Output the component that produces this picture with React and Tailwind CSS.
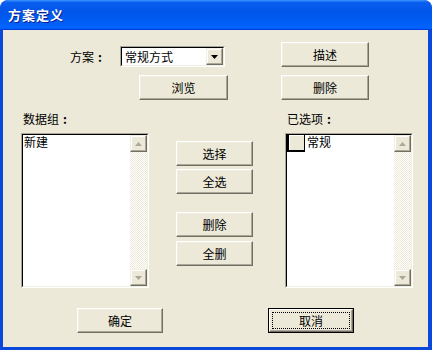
import React from 'react';

const font = { fontFamily: '"Noto Sans CJK SC", "Noto Sans", sans-serif' };

// full-width colon, centred in its 12px cell like the original bitmap font
function Colon() {
  return <span className="inline-block w-[12px] text-center font-bold">:</span>;
}

function Btn({ label, className = '' }) {
  return (
    <div
      className={`flex items-center justify-center h-[25px] bg-[#ece9d8] border border-t-white border-l-white border-b-[#716f64] border-r-[#716f64] shadow-[inset_-1px_-1px_0_#aca899,inset_1px_1px_0_#f1efe2] text-[12px] leading-[14px] text-black ${className}`}
    >
      {label}
    </div>
  );
}

function DefaultBtn({ label, className = '' }) {
  return (
    <div className={`h-[25px] border border-black ${className}`}>
      <div className="h-full flex bg-[#ece9d8] border border-t-white border-l-white border-b-[#716f64] border-r-[#716f64] shadow-[inset_-1px_-1px_0_#aca899]">
        <div className="flex-1 m-[2px] flex items-center justify-center border border-dotted border-black text-[12px] leading-[14px] text-black">
          {label}
        </div>
      </div>
    </div>
  );
}

function Arrow({ up, color }) {
  return (
    <svg width="7" height="4" viewBox="0 0 7 4">
      <polygon points={up ? '3.5,0 7,4 0,4' : '0,0 7,0 3.5,4'} fill={color} />
    </svg>
  );
}

function ScrollBtn({ up }) {
  return (
    <div className="w-[17px] h-[17px] flex items-center justify-center bg-[#ece9d8] border border-t-[#f1efe2] border-l-[#f1efe2] border-b-[#716f64] border-r-[#716f64] shadow-[inset_-1px_-1px_0_#aca899,inset_1px_1px_0_#fff]">
      <Arrow up={up} color="#aca899" />
    </div>
  );
}

function ListBox({ children, className = '' }) {
  return (
    <div className={`h-[155px] flex border border-t-[#aca899] border-l-[#aca899] border-b-white border-r-white ${className}`}>
      <div className="flex-1 flex bg-white border border-t-black border-l-black border-b-[#f1efe2] border-r-[#f1efe2]">
        <div className="flex-1 text-[12px] leading-[14px] text-black">{children}</div>
        <div className="w-[17px] flex flex-col bg-[repeating-conic-gradient(#ece9d8_0_25%,#fff_0_50%)] bg-size-[2px_2px]">
          <ScrollBtn up />
          <div className="flex-1" />
          <ScrollBtn />
        </div>
      </div>
    </div>
  );
}

export default function App() {
  return (
    <div className="w-[432px] h-[350px] bg-white" style={font}>
      <div className="w-full h-full flex flex-col rounded-t-[8px] bg-[#0a48dc] overflow-hidden">
        <div className="h-[30px] shrink-0 flex items-center pl-[8px] rounded-t-[8px] bg-[linear-gradient(180deg,#3d95ff_0,#0a5ff0_8%,#0055e8_40%,#0062fc_88%,#0066ff_93%,#005bff_95%,#0040d8_97%,#003dd7_100%)]">
          <span className="text-white font-bold text-[13px] leading-[16px] tracking-[1px] [text-shadow:1px_1px_0_#0a1e8a]">
            方案定义
          </span>
        </div>
        <div className="flex-1 ml-[3px] mr-[4px] mb-[3px] bg-[#ece9d8] flex flex-col text-black">
          {/* top section */}
          <div className="flex pt-[12px]">
            <div className="flex flex-col ml-[67px]">
              <div className="flex items-center mt-[4px]">
                <span className="w-[36px] whitespace-nowrap text-[12px] leading-[14px]">方案<Colon /></span>
                <div className="ml-[14px] w-[105px] h-[21px] flex border border-t-[#aca899] border-l-[#aca899] border-b-white border-r-white">
                  <div className="flex-1 flex bg-white border border-t-black border-l-black border-b-[#f1efe2] border-r-[#f1efe2]">
                    <div className="flex-1 pl-[3px] flex items-center text-[12px] leading-[14px]">常规方式</div>
                    <div className="w-[17px] flex items-center justify-center bg-[#ece9d8] border border-t-[#f1efe2] border-l-[#f1efe2] border-b-[#716f64] border-r-[#716f64] shadow-[inset_-1px_-1px_0_#aca899,inset_1px_1px_0_#fff]">
                      <Arrow color="#000" />
                    </div>
                  </div>
                </div>
              </div>
              <Btn label="浏览" className="ml-[69px] mt-[8px] w-[89px]" />
            </div>
            <div className="flex flex-col ml-[53px]">
              <Btn label="描述" className="w-[88px]" />
              <Btn label="删除" className="w-[88px] mt-[8px]" />
            </div>
          </div>

          {/* lists */}
          <div className="flex pl-[18px] mt-[12px]">
            <div className="w-[128px] flex flex-col">
              <div className="h-[14px] pl-[2px] whitespace-nowrap text-[12px] leading-[14px]">数据组<Colon /></div>
              <ListBox className="mt-[7px]">
                <div className="pl-[1px]">新建</div>
              </ListBox>
            </div>
            <div className="w-[77px] ml-[27px] flex flex-col pt-[29px]">
              <Btn label="选择" />
              <Btn label="全选" className="mt-[3px]" />
              <Btn label="删除" className="mt-[18px]" />
              <Btn label="全删" className="mt-[4px]" />
            </div>
            <div className="w-[128px] ml-[32px] flex flex-col">
              <div className="h-[14px] pl-[2px] whitespace-nowrap text-[12px] leading-[14px]">已选项<Colon /></div>
              <ListBox className="mt-[7px]">
                <div className="flex items-start">
                  <div className="w-[18px] h-[18px] -mt-px border-2 border-black border-r border-t bg-[#ece9d8] shadow-[inset_1px_1px_0_#fff]" />
                  <span className="ml-[2px]">常规</span>
                </div>
              </ListBox>
            </div>
          </div>

          {/* bottom buttons */}
          <div className="flex mt-[20px] ml-[74px]">
            <Btn label="确定" className="w-[86px]" />
            <DefaultBtn label="取消" className="w-[86px] ml-[105px]" />
          </div>
        </div>
      </div>
    </div>
  );
}
